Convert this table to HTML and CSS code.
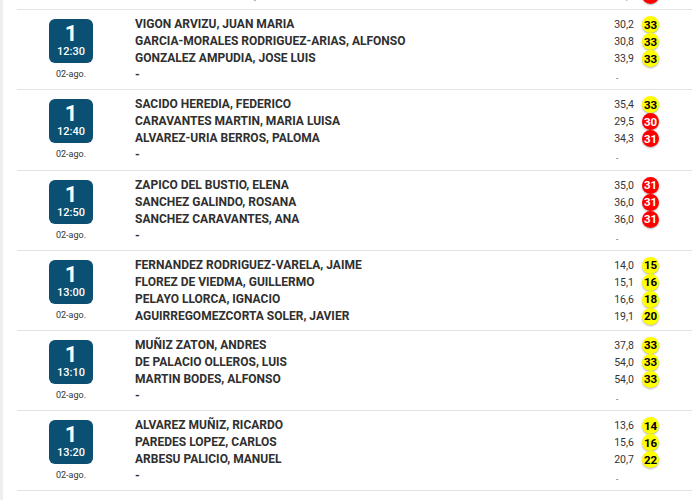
FILE: index.html
```
<!DOCTYPE html>
<html lang="es">
<head>
<meta charset="utf-8">
<title>Horarios</title>
<link rel="stylesheet" href="styles.css">
</head>
<body>
<div class="page">
  <div class="list">
    <div class="row">
      <div class="slot">
        <div class="badge"><span class="hole">1</span><span class="time">12:20</span></div>
        <div class="date">02-ago.</div>
      </div>
      <div class="names">
        <div class="name">GARCIA FERNANDEZ, LUIS</div>
        <div class="name">MENENDEZ SUAREZ, PABLO</div>
        <div class="name">ALONSO GARCIA, JAVIER</div>
        <div class="name">RODRIGUEZ ALVAREZ, JUAN</div>
      </div>
      <div class="scores">
        <div class="score"><span class="hcp">29,1</span><span class="dot red">31</span></div>
        <div class="score"><span class="hcp">28,7</span><span class="dot red">31</span></div>
        <div class="score"><span class="hcp">30,4</span><span class="dot red">31</span></div>
        <div class="score"><span class="hcp">29,5</span><span class="dot red">31</span></div>
      </div>
    </div>

    <div class="row">
      <div class="slot">
        <div class="badge"><span class="hole">1</span><span class="time">12:30</span></div>
        <div class="date">02-ago.</div>
      </div>
      <div class="names">
        <div class="name">VIGON ARVIZU, JUAN MARIA</div>
        <div class="name">GARCIA-MORALES RODRIGUEZ-ARIAS, ALFONSO</div>
        <div class="name">GONZALEZ AMPUDIA, JOSE LUIS</div>
        <div class="name">-</div>
      </div>
      <div class="scores">
        <div class="score"><span class="hcp">30,2</span><span class="dot yellow">33</span></div>
        <div class="score"><span class="hcp">30,8</span><span class="dot yellow">33</span></div>
        <div class="score"><span class="hcp">33,9</span><span class="dot yellow">33</span></div>
        <div class="score"><span class="hcp empty">-</span></div>
      </div>
    </div>

    <div class="row">
      <div class="slot">
        <div class="badge"><span class="hole">1</span><span class="time">12:40</span></div>
        <div class="date">02-ago.</div>
      </div>
      <div class="names">
        <div class="name">SACIDO HEREDIA, FEDERICO</div>
        <div class="name">CARAVANTES MARTIN, MARIA LUISA</div>
        <div class="name">ALVAREZ-URIA BERROS, PALOMA</div>
        <div class="name">-</div>
      </div>
      <div class="scores">
        <div class="score"><span class="hcp">35,4</span><span class="dot yellow">33</span></div>
        <div class="score"><span class="hcp">29,5</span><span class="dot red">30</span></div>
        <div class="score"><span class="hcp">34,3</span><span class="dot red">31</span></div>
        <div class="score"><span class="hcp empty">-</span></div>
      </div>
    </div>

    <div class="row">
      <div class="slot">
        <div class="badge"><span class="hole">1</span><span class="time">12:50</span></div>
        <div class="date">02-ago.</div>
      </div>
      <div class="names">
        <div class="name">ZAPICO DEL BUSTIO, ELENA</div>
        <div class="name">SANCHEZ GALINDO, ROSANA</div>
        <div class="name">SANCHEZ CARAVANTES, ANA</div>
        <div class="name">-</div>
      </div>
      <div class="scores">
        <div class="score"><span class="hcp">35,0</span><span class="dot red">31</span></div>
        <div class="score"><span class="hcp">36,0</span><span class="dot red">31</span></div>
        <div class="score"><span class="hcp">36,0</span><span class="dot red">31</span></div>
        <div class="score"><span class="hcp empty">-</span></div>
      </div>
    </div>

    <div class="row">
      <div class="slot">
        <div class="badge"><span class="hole">1</span><span class="time">13:00</span></div>
        <div class="date">02-ago.</div>
      </div>
      <div class="names">
        <div class="name">FERNANDEZ RODRIGUEZ-VARELA, JAIME</div>
        <div class="name">FLOREZ DE VIEDMA, GUILLERMO</div>
        <div class="name">PELAYO LLORCA, IGNACIO</div>
        <div class="name">AGUIRREGOMEZCORTA SOLER, JAVIER</div>
      </div>
      <div class="scores">
        <div class="score"><span class="hcp">14,0</span><span class="dot yellow">15</span></div>
        <div class="score"><span class="hcp">15,1</span><span class="dot yellow">16</span></div>
        <div class="score"><span class="hcp">16,6</span><span class="dot yellow">18</span></div>
        <div class="score"><span class="hcp">19,1</span><span class="dot yellow">20</span></div>
      </div>
    </div>

    <div class="row">
      <div class="slot">
        <div class="badge"><span class="hole">1</span><span class="time">13:10</span></div>
        <div class="date">02-ago.</div>
      </div>
      <div class="names">
        <div class="name">MUÑIZ ZATON, ANDRES</div>
        <div class="name">DE PALACIO OLLEROS, LUIS</div>
        <div class="name">MARTIN BODES, ALFONSO</div>
        <div class="name">-</div>
      </div>
      <div class="scores">
        <div class="score"><span class="hcp">37,8</span><span class="dot yellow">33</span></div>
        <div class="score"><span class="hcp">54,0</span><span class="dot yellow">33</span></div>
        <div class="score"><span class="hcp">54,0</span><span class="dot yellow">33</span></div>
        <div class="score"><span class="hcp empty">-</span></div>
      </div>
    </div>

    <div class="row">
      <div class="slot">
        <div class="badge"><span class="hole">1</span><span class="time">13:20</span></div>
        <div class="date">02-ago.</div>
      </div>
      <div class="names">
        <div class="name">ALVAREZ MUÑIZ, RICARDO</div>
        <div class="name">PAREDES LOPEZ, CARLOS</div>
        <div class="name">ARBESU PALICIO, MANUEL</div>
        <div class="name">-</div>
      </div>
      <div class="scores">
        <div class="score"><span class="hcp">13,6</span><span class="dot yellow">14</span></div>
        <div class="score"><span class="hcp">15,6</span><span class="dot yellow">16</span></div>
        <div class="score"><span class="hcp">20,7</span><span class="dot yellow">22</span></div>
        <div class="score"><span class="hcp empty">-</span></div>
      </div>
    </div>

    <div class="row last"></div>
  </div>
</div>
</body>
</html>
```
FILE: styles.css
```
html, body {
  margin: 0;
  padding: 0;
  background: #fff;
}
body {
  font-family: Roboto, "Liberation Sans", sans-serif;
  color: #333;
  height: 500px;
  overflow: hidden;
}
.page {
  border-left: 3px solid #eeeeee;
  padding-left: 14px;
  height: 500px;
  overflow: hidden;
}
.list {
  margin-top: -71px;
}
.row {
  display: grid;
  grid-template-columns: 108px 1fr 90px;
  padding: 6px 0 5.2px;
  border-top: 1px solid #e3e3e3;
}
.row.last {
  height: 40px;
}
.slot {
  display: flex;
  flex-direction: column;
  align-items: center;
  padding-top: 3px;
}
.badge {
  width: 44px;
  height: 44px;
  border-radius: 6px;
  background: #0b4f72;
  color: #fff;
  display: flex;
  flex-direction: column;
  align-items: center;
  justify-content: center;
}
.hole {
  font-size: 22px;
  font-weight: 700;
  line-height: 22px;
}
.time {
  font-size: 11px;
  font-weight: 500;
  line-height: 14px;
}
.date {
  margin-top: 6px;
  font-size: 9px;
  line-height: 11px;
  color: #333;
}
.names {
  padding-left: 10px;
}
.name {
  font-size: 12px;
  font-weight: 700;
  line-height: 17px;
  color: #2f2f2f;
  white-space: nowrap;
}
.scores {
  display: flex;
  flex-direction: column;
}
.score {
  display: flex;
  align-items: center;
  height: 17px;
}
.hcp {
  width: 32px;
  text-align: right;
  font-size: 10.5px;
  color: #333;
}
.hcp.empty {
  width: auto;
  padding-left: 14px;
  font-size: 8px;
  padding-top: 6px;
}
.dot {
  width: 17px;
  height: 17px;
  margin-left: 8px;
  border-radius: 50%;
  display: flex;
  align-items: center;
  justify-content: center;
  font-size: 11.5px;
  font-weight: 700;
  box-shadow: 0 1px 2px rgba(0, 0, 0, 0.3);
}
.dot.yellow {
  background: #ffff00;
  color: #000;
}
.dot.red {
  background: #ff0000;
  color: #fff;
}
```
